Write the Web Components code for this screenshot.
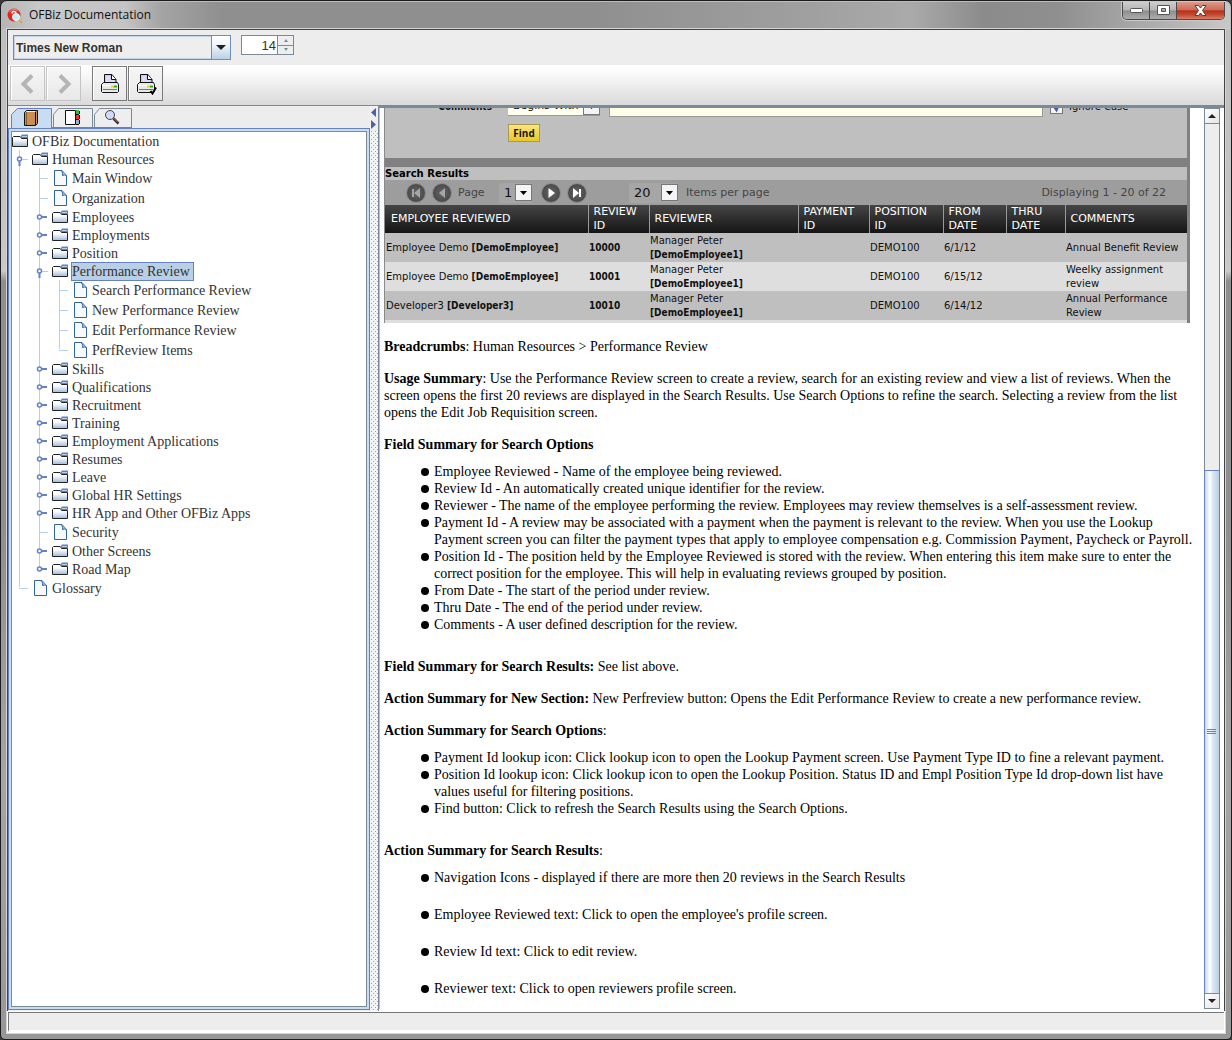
<!DOCTYPE html>
<html lang="en">
<head>
<meta charset="utf-8">
<title>OFBiz Documentation</title>
<style>
html,body{margin:0;height:100%}
body{background:#3a3a3a;font-family:"Liberation Serif",serif;font-size:14px;line-height:17px;color:#000}
</style>
</head>
<body>
<help-window>
  <title-bar slot="title">OFBiz Documentation</title-bar>
  <font-bar slot="bars"></font-bar>
  <tool-bar slot="bars"></tool-bar>
  <side-tabs slot="side">
    <tree-node root kind="folder" open label="OFBiz Documentation">
      <tree-node kind="folder" open label="Human Resources">
        <tree-node kind="page" label="Main Window"></tree-node>
        <tree-node kind="page" label="Organization"></tree-node>
        <tree-node kind="folder" label="Employees"></tree-node>
        <tree-node kind="folder" label="Employments"></tree-node>
        <tree-node kind="folder" label="Position"></tree-node>
        <tree-node kind="folder" open selected label="Performance Review">
          <tree-node kind="page" label="Search Performance Review"></tree-node>
          <tree-node kind="page" label="New Performance Review"></tree-node>
          <tree-node kind="page" label="Edit Performance Review"></tree-node>
          <tree-node kind="page" last label="PerfReview Items"></tree-node>
        </tree-node>
        <tree-node kind="folder" label="Skills"></tree-node>
        <tree-node kind="folder" label="Qualifications"></tree-node>
        <tree-node kind="folder" label="Recruitment"></tree-node>
        <tree-node kind="folder" label="Training"></tree-node>
        <tree-node kind="folder" label="Employment Applications"></tree-node>
        <tree-node kind="folder" label="Resumes"></tree-node>
        <tree-node kind="folder" label="Leave"></tree-node>
        <tree-node kind="folder" label="Global HR Settings"></tree-node>
        <tree-node kind="folder" label="HR App and Other OFBiz Apps"></tree-node>
        <tree-node kind="page" label="Security"></tree-node>
        <tree-node kind="folder" label="Other Screens"></tree-node>
        <tree-node kind="folder" last label="Road Map"></tree-node>
      </tree-node>
      <tree-node kind="page" last label="Glossary"></tree-node>
    </tree-node>
  </side-tabs>
  <split-divider slot="divider"></split-divider>
  <help-page slot="page"></help-page>
  <scroll-bar slot="scroll"></scroll-bar>
</help-window>

<script>
const define = (name, html, init) => {
  const t = document.createElement('template');
  t.innerHTML = '<style>*{box-sizing:border-box}svg{display:block}button,input,select{margin:0;font:inherit;color:inherit}</style>' + html;
  customElements.define(name, class extends HTMLElement {
    constructor() {
      super();
      this.attachShadow({mode: 'open'}).appendChild(t.content.cloneNode(true));
    }
    connectedCallback() { if (init) init(this, this.shadowRoot); }
  });
};

define('help-window', `
<style>
:host{display:flex;flex-direction:column;min-height:100vh;box-sizing:border-box;padding:1px;
  border:1px solid #1c1c1c;border-radius:7px 7px 5px 5px;
  background:linear-gradient(#bdbdbd 0,#c4c4c4 20%,#c9c9c9 26%,#8e8e8e 27%,#8e8e8e 50%,#a5a5a5 75%,#979797)}
.client{flex:1;display:flex;flex-direction:column;margin:0 5px 5px;border:1px solid #444;outline:1px solid #d4d4d4;background:#ededed}
.split{flex:1;display:flex;min-height:0;border-top:1px solid #7a8a99}
.side{flex:none;width:362px;display:flex}
.main{flex:1;display:flex;min-width:0;background:#fff;border-left:1px solid #7a8a99;border-top:2px solid #7a8a99;padding-bottom:3px}
.page{flex:1;min-width:0;border-left:1px solid #b9c2cb}
.scroll{display:flex;padding-right:4px}
.status{height:20px;background:#ededed;border-top:1px solid #777;border-left:1px solid #777;border-bottom:2px solid #fff;outline:1px solid #fff}
</style>
<slot name="title"></slot>
<div class="client">
  <slot name="bars"></slot>
  <div class="split">
    <div class="side"><slot name="side"></slot></div>
    <slot name="divider"></slot>
    <div class="main">
      <div class="page"><slot name="page"></slot></div>
      <div class="scroll"><slot name="scroll"></slot></div>
    </div>
  </div>
  <div class="status"></div>
</div>`);

define('title-bar', `
<style>
:host{display:flex;align-items:center;height:27px;padding-left:5px;padding-right:5px;border-radius:6px 6px 0 0;
  font:12px/16px "Open Sans",sans-serif;color:#111;
  background:linear-gradient(90deg,#b5b5b5 0,#c8c8c8 3%,#c4c4c4 10%,#a4a4a4 13%,#8f8f8f 18%,#8f8f8f 48%,#a0a0a0 66%,#aaa 74%,#8b8b8b 80%,#8f8f8f 86%,#b2b2b2 95%,#c8c8c8)}
.name{flex:1;padding-left:6px;padding-bottom:1px}
.ctl{display:flex;align-self:flex-start;border:1px solid #4a4a4a;border-top:0;border-radius:0 0 5px 5px;overflow:hidden;box-shadow:0 0 0 1px #c8c8c8}
button{height:17px;width:27px;padding:0;border:0;border-right:1px solid #4a4a4a;display:flex;align-items:center;justify-content:center;
  background:linear-gradient(#cdcdcd,#b5b5b5 48%,#8d8d8d 52%,#adadad)}
button.x{width:47px;border-right:0;background:linear-gradient(#dc9a8c,#cf6a58 46%,#b7301a 52%,#c24a30 75%,#d98066)}
</style>
<svg width="16" height="16" viewBox="0 0 16 16"><circle cx="7" cy="7" r="6.500" fill="#e1261c"/><path d="M2.500 4q3-4 8-1.500" stroke="#f79a90" fill="none"/><path d="M5 5.500q0-2 2-2t2 2q0 1-1.500 2" stroke="#fff" stroke-width="1.500" fill="none"/><circle cx="9" cy="9" r="3.500" fill="#c5ecf8" stroke="#fff"/><path d="M12 12l3 3" stroke="#d9a45a" stroke-width="2"/></svg>
<span class="name"><slot></slot></span>
<div class="ctl">
  <button aria-label="Minimize"><svg width="13" height="7" viewBox="0 0 13 7"><rect x=".5" y="1.500" width="12" height="4" rx="1" fill="#fff" stroke="#555"/></svg></button>
  <button aria-label="Maximize"><svg width="13" height="11" viewBox="0 0 13 11"><path d="M.5.5h12v9h-12zM4.500 3.500h4v3h-4z" fill="#fff" fill-rule="evenodd" stroke="#555"/></svg></button>
  <button class="x" aria-label="Close"><svg width="13" height="11" viewBox="0 0 13 11"><path d="M1 .5h3.500l2 2.500 2-2.500H12L8.500 5.500l3.500 5H8.500l-2-2.500-2 2.500H1l3.500-5z" fill="#fff" stroke="#5b3a3a"/></svg></button>
</div>`);

define('font-bar', `
<style>
:host{display:flex;align-items:flex-start;gap:10px;height:35px;padding:5px 5px 0;box-sizing:border-box;background:#ededed;color:#333}
.combo{display:flex;position:relative;width:218px;height:25px}
select{appearance:none;flex:1;border:1px solid #7a8a99;border-radius:0;background:#eee;padding:0 22px 0 2px;font:bold 12px/16px "Liberation Sans",sans-serif;box-shadow:inset 0 0 0 1px #c4d4e6}
.combo svg{position:absolute;right:0;top:0;pointer-events:none}
.spin{display:flex;width:53px;height:20px;border:1px solid #7a8a99;background:#fff}
input{appearance:none;flex:1;min-width:0;border:0;padding:2px 1px 0 0;text-align:right;background:#fff;font:13px/16px "Liberation Sans",sans-serif}
.steps{display:flex;flex-direction:column;width:16px;border-left:1px solid #7a8a99}
.steps button{flex:1;padding:0;border:0;background:#eee;display:flex;align-items:center;justify-content:center}
.steps button+button{border-top:1px solid #7a8a99}
</style>
<div class="combo">
  <select aria-label="Font"><option>Times New Roman</option></select>
  <svg width="20" height="25" viewBox="0 0 20 25"><defs><linearGradient id="g" x2="0" y2="1"><stop offset="0" stop-color="#fff"/><stop offset=".35" stop-color="#f4f8fc"/><stop offset="1" stop-color="#b8cfe5"/></linearGradient></defs><rect x=".5" y=".5" width="19" height="24" fill="url(#g)" stroke="#6e8fb5"/><path d="M5 10h10l-5 5z" fill="#222"/></svg>
</div>
<div class="spin"><input type="text" aria-label="Size" value="14"><span class="steps">
<button aria-label="Larger"><svg width="4" height="3"><path d="M0 3l2-3 2 3z" fill="#7a8a99"/></svg></button>
<button aria-label="Smaller"><svg width="4" height="3"><path d="M0 0l2 3 2-3z" fill="#7a8a99"/></svg></button></span></div>`);

const printer = `<path d="M5.500 10.500v-9h7.500l4 5v4z" fill="#c9c9f4" stroke="#111"/><path d="M12.500 2v4.500H17" fill="#fff" stroke="#111"/><path d="M7 4h4M7 6h4M7 8h8" stroke="#eeeeff"/><path d="M2.500 11.500l2-2h14l1 2v7l-1 1h-15l-1-1z" fill="#e8e8e8" stroke="#111"/><path d="M3 12.500h16" stroke="#fff"/><path d="M4 16.500h14" stroke="#777"/><path d="M12 13.500h3" stroke="#dddd00" stroke-width="2"/><path d="M15 13.500h3" stroke="#22aa22" stroke-width="2"/>`;
define('tool-bar', `
<style>
:host{display:flex;height:40px;box-sizing:border-box;padding:1px 2px 4px;gap:1px;background:linear-gradient(#fff,#fcfcfc 15%,#dadada)}
button{width:35px;height:35px;padding:0;display:flex;align-items:center;justify-content:center;background:linear-gradient(#f6f6f6,#e8e8e8);border:1px solid #7a7a7a;box-shadow:inset 1px 1px #fff}
button:disabled{border-color:#c4c4c4}
.gap{width:9px}
</style>
<button disabled aria-label="Back"><svg width="20" height="20" viewBox="0 0 20 20"><path d="M14 1.500L5.500 10l8.500 8.500" fill="none" stroke="#b5b5b5" stroke-width="4"/></svg></button>
<button disabled aria-label="Forward"><svg width="20" height="20" viewBox="0 0 20 20"><path d="M6 1.500l8.500 8.500L6 18.500" fill="none" stroke="#b5b5b5" stroke-width="4"/></svg></button>
<span class="gap"></span>
<button aria-label="Print"><svg width="22" height="22" viewBox="0 0 22 22">${printer}</svg></button>
<button aria-label="Page setup"><svg width="22" height="22" viewBox="0 0 22 22">${printer}<path d="M15.500 18l2 2.500 3.500-6" fill="none" stroke="#000" stroke-width="2"/></svg></button>`);

define('side-tabs', `
<style>
:host{display:flex;flex-direction:column;flex:1;padding-top:2px;min-width:0}
.tabs{display:flex;height:20px;padding-left:3px;background:#ededed}
button{width:41px;height:20px;padding:0;border:0;background:none}
.pane{flex:1;border:1px solid #6382bf;padding:2px;background:#c8ddf2;margin-bottom:2px}
.tree{height:100%;background:#fff;border:1px solid #7a8a99}
</style>
<div class="tabs" role="tablist">
<button role="tab" aria-label="Contents"><svg width="41" height="20"><path d="M.5 20V6.500L6.500.5h34V20" fill="#c8ddf2" stroke="#6382bf"/><path d="M13.500 4.500l2-2h11v13l-2 2h-11z" fill="#c98f52" stroke="#111"/><path d="M15.500 4v13" stroke="#8a5a2b"/><path d="M24.500 4v13" stroke="#111"/><path d="M15 3.500h9" stroke="#eec"/></svg></button>
<button role="tab" aria-label="Index"><svg width="41" height="20"><path d="M1.500 19V6.500l5-6h34V19" fill="#eee" stroke="#7a8a99"/><path d="M0 19.500h41" stroke="#6382bf"/><path d="M13.500 2.500h10v14h-10z" fill="#fff" stroke="#111"/><path d="M24 2h3v4h-3z" fill="#3b4"/><path d="M24 7h3v4h-3z" fill="#e33"/><path d="M24 12h3v4h-3z" fill="#aac"/><path d="M27.500 3v3M27.500 7v4M27.500 12v4M24 6.500h3M24 11.500h3M24 16.500h3" stroke="#111"/></svg></button>
<button role="tab" aria-label="Search"><svg width="41" height="20"><path d="M1.500 19V6.500l5-6h32V19" fill="#eee" stroke="#7a8a99"/><path d="M0 19.500h39" stroke="#6382bf"/><circle cx="17" cy="7" r="4.500" fill="#d4d8ff" stroke="#444"/><path d="M20.500 10.500l5 5" stroke="#222" stroke-width="2.500"/><path d="M21 10.500l4 4" stroke="#d88"/></svg></button>
</div>
<div class="pane"><div class="tree"><slot></slot></div></div>`);

const folder = `<svg width="16" height="14" viewBox="0 0 16 14"><defs><linearGradient id="f" x2="0" y2="1"><stop offset=".3" stop-color="#fff"/><stop offset="1" stop-color="#9dbadb"/></linearGradient></defs><path d="M.5 12.500v-9l1-1H8l1.500 2h6v8z" fill="url(#f)" stroke="#222"/><path d="M8.500 4V2.500L10 .500h6V4z" fill="#6382bf"/><path d="M10 2.500h5" stroke="#b8cfe5"/></svg>`;
const page = `<svg width="16" height="16" viewBox="0 0 16 16"><path d="M2.500.5h7.500l4.500 5v10h-12z" fill="#f7fafd" stroke="#31649c"/><path d="M9.500 1q2 2 1 4.500 2-1 4 0" fill="#b8cfe5" stroke="#31649c"/></svg>`;
define('tree-node', `
<style>
:host{display:block;position:relative;color:#333}
.row{display:flex;align-items:center;height:18px}
:host([kind=page]) .row{height:20px}
.gut{width:20px;display:flex;align-items:center}
.icon{width:20px}
.label{border:1px solid transparent;margin-left:-1px;line-height:17px;height:19px;white-space:nowrap}
:host([selected]) .label{background:#b8cfe5;border-color:#6382bf;padding-right:3px}
.kids{margin-left:20px}
:host([root]) .kids{margin-left:0}
:host([root]) .gut{display:none}
:host(:not([root]))::before{content:"";position:absolute;left:7px;top:0;bottom:0;width:1px;background:#b8cfe5}
:host([last])::before{bottom:auto;height:9px}
</style>
<div class="row"><span class="gut"></span><span class="icon"></span><span class="label"></span></div>
<div class="kids"><slot></slot></div>`, (el, r) => {
  const isFolder = el.getAttribute('kind') === 'folder';
  r.querySelector('.icon').innerHTML = isFolder ? folder : page;
  r.querySelector('.label').textContent = el.getAttribute('label');
  r.querySelector('.gut').innerHTML = '<svg width="20" height="18" viewBox="0 0 20 18" style="position:relative">' + (
    !isFolder ? '<path d="M7 9.500h9" stroke="#b8cfe5"/>' :
    el.hasAttribute('open') ? '<path d="M10 9.500h6" stroke="#b8cfe5"/><circle cx="7.500" cy="9" r="2" fill="#fff" stroke="#6382bf" stroke-width="1.500"/><path d="M7.500 11v5" stroke="#6382bf" stroke-width="2"/>' :
    '<circle cx="7.500" cy="9" r="2" fill="#fff" stroke="#6382bf" stroke-width="1.500"/><path d="M10 9h5" stroke="#6382bf" stroke-width="2"/>') + '</svg>';
});

define('split-divider', `
<style>
:host{display:block;width:8px;padding:1px 0 0 1px;box-sizing:border-box;
 background:#f4f4f4 url('data:image/svg+xml,<svg xmlns="http://www.w3.org/2000/svg" width="4" height="4"><path d="M1 1h1v1H1zM3 3h1v1H3z" fill="%2398a0ac"/></svg>')}
button{display:block;width:7px;height:12px;padding:0;border:0;background:#eee}
</style>
<button aria-label="Collapse left"><svg width="6" height="12"><path d="M5 1v9L0 5.500z" fill="#4a63a8"/></svg></button>
<button aria-label="Collapse right"><svg width="6" height="12"><path d="M0 1v9l5-4.500z" fill="#4a63a8"/></svg></button>`);

define('scroll-bar', `
<style>
:host{display:flex;flex-direction:column;width:16px;flex:1;box-sizing:border-box}
button{height:16px;padding:0;border:1px solid #7a8a99;background:linear-gradient(135deg,#fff,#e4e4e4);display:flex;align-items:center;justify-content:center}
.rest{flex:346;background:#ededed;border:solid #7a8a99;border-width:0 1px}
.thumb{flex:522;border:1px solid #6382bf;border-bottom-width:0;background:linear-gradient(90deg,#c6d8ee,#fff 35%,#dbe7f4 55%,#b8cfe5);display:flex;align-items:center;justify-content:center}
</style>
<button aria-label="Scroll up"><svg width="8" height="4"><path d="M0 4l4-4 4 4z" fill="#222"/></svg></button>
<div class="rest"></div>
<div class="thumb"><svg width="10" height="6"><path d="M0 .5h9M0 2.500h9M0 4.500h9" stroke="#6382bf"/></svg></div>
<button aria-label="Scroll down"><svg width="8" height="4"><path d="M0 0l4 4 4-4z" fill="#222"/></svg></button>`);

define('pick-list', `
<style>
:host{display:inline-flex;position:relative;height:20px}
select{appearance:none;border:0;border-radius:0;width:100%;background:var(--pick-bg,#a6a6a6);padding:0 18px 0 5px;text-align:left;color:#111}
svg{position:absolute;right:0;top:1px;pointer-events:none}
</style>
<select><option></option></select>
<svg width="17" height="17" viewBox="0 0 17 17"><rect x=".5" y=".5" width="16" height="16" fill="#f4f4f4" stroke="#777"/><path d="M5 7h7l-3.500 4z" fill="#000"/></svg>`, (el, r) => {
  r.querySelector('option').textContent = el.getAttribute('value');
  r.querySelector('select').setAttribute('aria-label', el.getAttribute('name'));
});

define('pager-button', `
<style>
:host{display:block}
button{display:block;width:20px;height:20px;padding:0;border:1px solid #8a8a8a;border-radius:50%;background:radial-gradient(#666,#4c4c4c 65%,#757575)}
svg{fill:#fff}
:host([off]) svg{fill:#a5a5a5}
</style>
<button><svg width="18" height="18" viewBox="0 0 18 18"><path/></svg></button>`, (el, r) => {
  const d = {first:'M5 5h2v8H5zM13 4v10L7 9z', prev:'M12 4v10L6 9z', next:'M6.500 4v10l6.500-5z', last:'M5 4v10l6-5zM11 5h2v8h-2z'};
  const k = el.getAttribute('go');
  r.querySelector('path').setAttribute('d', d[k]);
  r.querySelector('button').setAttribute('aria-label', k);
});

define('review-screen', `
<style>
:host{display:block;width:806px;background:#bfbfbf;border-left:1px solid #8a8a8a;border-right:3px solid #808080;box-sizing:border-box;font:10px/14px "DejaVu Sans",sans-serif;color:#111}
b{font-family:"DejaVu Sans Condensed","DejaVu Sans",sans-serif}
.form{height:50px;overflow:hidden;display:flex;flex-direction:column;justify-content:flex-end;gap:7px;padding-bottom:16px}
.line{display:flex;flex:none;height:20px}
.line>label:first-child{width:107px;text-align:right;font-family:"DejaVu Sans Condensed","DejaVu Sans",sans-serif;font-weight:bold;line-height:20px}
.line pick-list{--pick-bg:#fffff0;width:92px;height:19px;margin-left:16px;border-bottom:1px solid #999;font-size:11px}
.line input[type=text]{width:434px;margin-left:9px;border:1px solid #999;border-radius:0;background:#ffffe8}
.tick{display:flex;gap:6px;margin-left:7px;line-height:20px}
.tick input{appearance:none;width:13px;height:13px;margin:4px 0 0;border:1px solid #777;
  background:#f4f4f4 url('data:image/svg+xml,<svg xmlns="http://www.w3.org/2000/svg" width="11" height="11"><path d="M2.500 4l3 4.500 3-7" fill="none" stroke="%234a5fa5" stroke-width="2"/></svg>')}
.find{flex:none;align-self:flex-start;width:32px;height:18px;margin-left:123px;padding:0;border:1px solid #a89a50;background:linear-gradient(#fbe678,#e9c62c);font:bold 10px/14px "Open Sans",sans-serif}
.rule{height:9px;background:#808080}
h3{margin:0;height:13px;font:bold 10px/13px "DejaVu Sans",sans-serif;color:#000}
.nav{height:25px;display:flex;align-items:center;padding:0 21px;background:#9d9d9d;font-size:11px;color:#444}
.nav pager-button+pager-button{margin-left:6px}
.nav .pg{width:28px;margin:0 13px 0 6px}
.nav .p1{width:33px;margin-right:9px}
.nav .p2{width:49px;margin-left:42px;margin-right:8px}
.nav .p1,.nav .p2{font-size:13px}
.nav .show{margin-left:auto}
table{border-collapse:collapse;table-layout:fixed;width:100%}
th{height:28px;padding:0 0 0 5px;text-align:left;font-weight:normal;font-size:11px;color:#fff;background:linear-gradient(#454545,#151515);border-left:1px solid #999}
th:first-child{border-left:0;padding-left:6px}
td{height:29px;padding:0 0 0 1px;line-height:14px}
tr:nth-child(even) td{background:#dedede}
.tail{height:3px;background:#dedede}
</style>
<div class="form">
  <div class="line"><label for="c">Comments</label><pick-list name="Match" value="Begins With"></pick-list><input id="c" type="text"><label class="tick"><input type="checkbox" checked>Ignore Case</label></div>
  <button class="find">Find</button>
</div>
<div class="rule"></div>
<h3>Search Results</h3>
<div class="nav">
  <pager-button off go="first"></pager-button><pager-button off go="prev"></pager-button><span class="pg">Page</span><pick-list class="p1" name="Page" value="1"></pick-list><pager-button go="next"></pager-button><pager-button go="last"></pager-button><pick-list class="p2" name="Page size" value="20"></pick-list><span>Items per page</span><span class="show">Displaying 1 - 20 of 22</span>
</div>
<table>
<colgroup><col style="width:203px"><col style="width:61px"><col style="width:149px"><col style="width:71px"><col style="width:74px"><col style="width:63px"><col style="width:59px"><col></colgroup>
<thead><tr><th>EMPLOYEE REVIEWED</th><th>REVIEW<br>ID</th><th>REVIEWER</th><th>PAYMENT<br>ID</th><th>POSITION<br>ID</th><th>FROM<br>DATE</th><th>THRU<br>DATE</th><th>COMMENTS</th></tr></thead>
<tbody>
<tr><td>Employee Demo <b>[DemoEmployee]</b></td><td><b>10000</b></td><td>Manager Peter<br><b>[DemoEmployee1]</b></td><td></td><td>DEMO100</td><td>6/1/12</td><td></td><td>Annual Benefit Review</td></tr>
<tr><td>Employee Demo <b>[DemoEmployee]</b></td><td><b>10001</b></td><td>Manager Peter<br><b>[DemoEmployee1]</b></td><td></td><td>DEMO100</td><td>6/15/12</td><td></td><td>Weelky assignment<br>review</td></tr>
<tr><td>Developer3 <b>[Developer3]</b></td><td><b>10010</b></td><td>Manager Peter<br><b>[DemoEmployee1]</b></td><td></td><td>DEMO100</td><td>6/14/12</td><td></td><td>Annual Performance<br>Review</td></tr>
</tbody></table>
<div class="tail"></div>`);

define('help-page', `
<style>
:host{display:block;padding:0 4px}
p{margin:15px 0 0}
ul{list-style:none;margin:10px 0 25px;padding:0 0 0 37px}
li{display:flex}
li::before{content:"";flex:none;width:8px;height:8px;margin:5px 5px 0 0;border-radius:50%;background:#000}
ul.wide li+li{margin-top:20px}
ul.wide{margin-bottom:0}
</style>
<review-screen></review-screen>
<p><b>Breadcrumbs</b>: Human Resources &gt; Performance Review</p>
<p><b>Usage Summary</b>: Use the Performance Review screen to create a review, search for an existing review and view a list of reviews. When the screen opens the first 20 reviews are displayed in the Search Results. Use Search Options to refine the search. Selecting a review from the list opens the Edit Job Requisition screen.</p>
<p><b>Field Summary for Search Options</b></p>
<ul>
<li>Employee Reviewed - Name of the employee being reviewed.</li>
<li>Review Id - An automatically created unique identifier for the review.</li>
<li>Reviewer - The name of the employee performing the review. Employees may review themselves is a self-assessment review.</li>
<li>Payment Id - A review may be associated with a payment when the payment is relevant to the review. When you use the Lookup Payment screen you can filter the payment types that apply to employee compensation e.g. Commission Payment, Paycheck or Payroll.</li>
<li>Position Id - The position held by the Employee Reviewed is stored with the review. When entering this item make sure to enter the correct position for the employee. This will help in evaluating reviews grouped by position.</li>
<li>From Date - The start of the period under review.</li>
<li>Thru Date - The end of the period under review.</li>
<li>Comments - A user defined description for the review.</li>
</ul>
<p><b>Field Summary for Search Results:</b> See list above.</p>
<p><b>Action Summary for New Section:</b> New Perfreview button: Opens the Edit Performance Review to create a new performance review.</p>
<p><b>Action Summary for Search Options</b>:</p>
<ul>
<li>Payment Id lookup icon: Click lookup icon to open the Lookup Payment screen. Use Payment Type ID to fine a relevant payment.</li>
<li>Position Id lookup icon: Click lookup icon to open the Lookup Position. Status ID and Empl Position Type Id drop-down list have values useful for filtering positions.</li>
<li>Find button: Click to refresh the Search Results using the Search Options.</li>
</ul>
<p><b>Action Summary for Search Results</b>:</p>
<ul class="wide">
<li>Navigation Icons - displayed if there are more then 20 reviews in the Search Results</li>
<li>Employee Reviewed text: Click to open the employee's profile screen.</li>
<li>Review Id text: Click to edit review.</li>
<li>Reviewer text: Click to open reviewers profile screen.</li>
</ul>`);
</script>
</body>
</html>
